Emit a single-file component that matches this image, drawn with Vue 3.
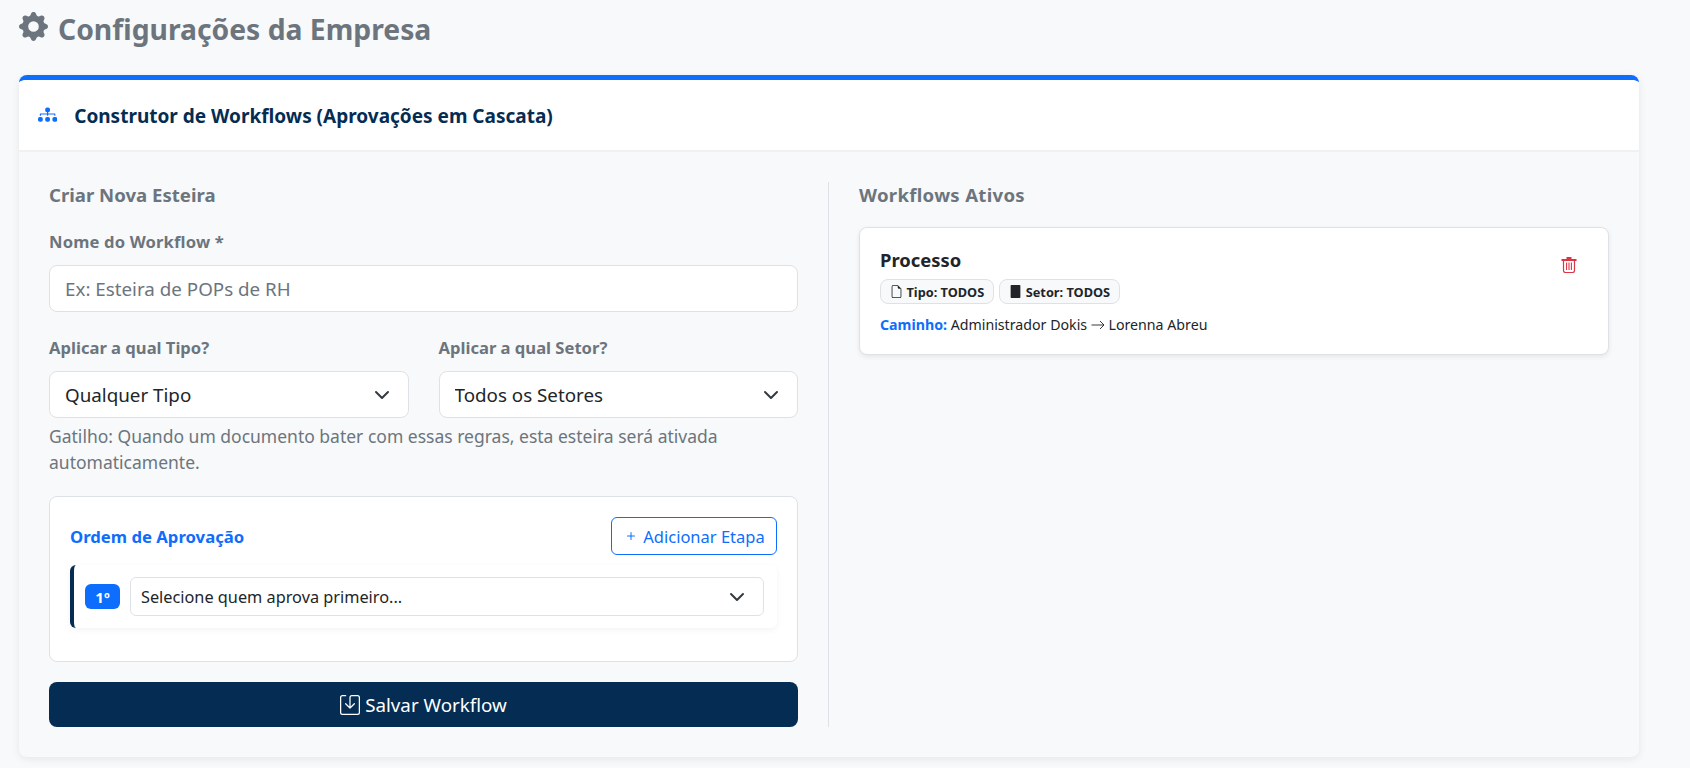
<script setup>
const steps = [{ n: '1º', label: 'Selecione quem aprova primeiro...' }]
</script>

<template>
  <div class="page">
    <h1 class="title">
      <svg class="gear" viewBox="0 0 16 16" fill="currentColor"><path d="M9.405 1.05c-.413-1.4-2.397-1.4-2.81 0l-.1.34a1.464 1.464 0 0 1-2.105.872l-.31-.17c-1.283-.698-2.686.705-1.987 1.987l.169.311c.446.82.023 1.841-.872 2.105l-.34.1c-1.4.413-1.4 2.397 0 2.81l.34.1a1.464 1.464 0 0 1 .872 2.105l-.17.31c-.698 1.283.705 2.686 1.987 1.987l.311-.169a1.464 1.464 0 0 1 2.105.872l.1.34c.413 1.4 2.397 1.4 2.81 0l.1-.34a1.464 1.464 0 0 1 2.105-.872l.31.17c1.283.698 2.686-.705 1.987-1.987l-.169-.311a1.464 1.464 0 0 1 .872-2.105l.34-.1c1.4-.413 1.4-2.397 0-2.81l-.34-.1a1.464 1.464 0 0 1-.872-2.105l.17-.31c.698-1.283-.705-2.686-1.987-1.987l-.311.169a1.464 1.464 0 0 1-2.105-.872zM8 10.93a2.929 2.929 0 1 1 0-5.86 2.929 2.929 0 0 1 0 5.858z"/></svg>
      Configurações da Empresa
    </h1>

    <section class="card">
      <header class="card-head">
        <svg class="diagram" viewBox="0 0 16 16" fill="currentColor"><path fill-rule="evenodd" d="M6 3.5A1.5 1.5 0 0 1 7.5 2h1A1.5 1.5 0 0 1 10 3.5v1A1.5 1.5 0 0 1 8.5 6v1H14a.5.5 0 0 1 .5.5v1a.5.5 0 0 1-1 0V8h-5v.5a.5.5 0 0 1-1 0V8h-5v.5a.5.5 0 0 1-1 0v-1A.5.5 0 0 1 2 7h5.5V6A1.5 1.5 0 0 1 6 4.5zm-6 8A1.5 1.5 0 0 1 1.5 10h1A1.5 1.5 0 0 1 4 11.5v1A1.5 1.5 0 0 1 2.5 14h-1A1.5 1.5 0 0 1 0 12.5zm6 0A1.5 1.5 0 0 1 7.5 10h1a1.5 1.5 0 0 1 1.5 1.5v1A1.5 1.5 0 0 1 8.5 14h-1A1.5 1.5 0 0 1 6 12.5zm6 0a1.5 1.5 0 0 1 1.5-1.5h1a1.5 1.5 0 0 1 1.5 1.5v1a1.5 1.5 0 0 1-1.5 1.5h-1a1.5 1.5 0 0 1-1.5-1.5z"/></svg>
        <h2>Construtor de Workflows (Aprovações em Cascata)</h2>
      </header>

      <div class="card-body">
        <div class="col-left">
          <h3 class="sec">Criar Nova Esteira</h3>
          <label class="lbl lbl-name">Nome do Workflow *</label>
          <input class="ctl" type="text" placeholder="Ex: Esteira de POPs de RH" />

          <div class="two">
            <div>
              <label class="lbl">Aplicar a qual Tipo?</label>
              <div class="sel">
                <select class="ctl"><option>Qualquer Tipo</option></select>
                <svg class="chev" viewBox="0 0 16 16"><path d="m2 5 6 6 6-6" fill="none" stroke="#343a40" stroke-linecap="round" stroke-linejoin="round" stroke-width="2"/></svg>
              </div>
            </div>
            <div>
              <label class="lbl">Aplicar a qual Setor?</label>
              <div class="sel">
                <select class="ctl"><option>Todos os Setores</option></select>
                <svg class="chev" viewBox="0 0 16 16"><path d="m2 5 6 6 6-6" fill="none" stroke="#343a40" stroke-linecap="round" stroke-linejoin="round" stroke-width="2"/></svg>
              </div>
            </div>
          </div>
          <p class="help">Gatilho: Quando um documento bater com essas regras, esta esteira será ativada automaticamente.</p>

          <div class="order">
            <div class="order-head">
              <h4>Ordem de Aprovação</h4>
              <button class="btn-add" type="button">
                <svg viewBox="0 0 16 16" fill="currentColor"><path d="M8 4a.5.5 0 0 1 .5.5v3h3a.5.5 0 0 1 0 1h-3v3a.5.5 0 0 1-1 0v-3h-3a.5.5 0 0 1 0-1h3v-3A.5.5 0 0 1 8 4"/></svg>
                Adicionar Etapa
              </button>
            </div>
            <div v-for="s in steps" :key="s.n" class="step">
              <span class="num">{{ s.n }}</span>
              <div class="sel sel-sm">
                <select class="ctl ctl-sm"><option>{{ s.label }}</option></select>
                <svg class="chev" viewBox="0 0 16 16"><path d="m2 5 6 6 6-6" fill="none" stroke="#343a40" stroke-linecap="round" stroke-linejoin="round" stroke-width="2"/></svg>
              </div>
            </div>
          </div>

          <button class="btn-save" type="button">
            <svg viewBox="0 0 16 16" fill="currentColor"><path d="M2 1a1 1 0 0 0-1 1v12a1 1 0 0 0 1 1h12a1 1 0 0 0 1-1V2a1 1 0 0 0-1-1H9.5a1 1 0 0 0-1 1v7.293l2.646-2.647a.5.5 0 0 1 .708.708l-3.5 3.5a.5.5 0 0 1-.708 0l-3.5-3.5a.5.5 0 1 1 .708-.708L7.5 9.293V2a2 2 0 0 1 2-2H14a2 2 0 0 1 2 2v12a2 2 0 0 1-2 2H2a2 2 0 0 1-2-2V2a2 2 0 0 1 2-2h2.5a.5.5 0 0 1 0 1z"/></svg>
            Salvar Workflow
          </button>
        </div>

        <div class="col-right">
          <h3 class="sec sec-wide">Workflows Ativos</h3>
          <article class="wf">
            <div class="wf-main">
              <h5>Processo</h5>
              <div class="tags">
                <span class="tag">
                  <svg viewBox="0 0 16 16" fill="currentColor"><path d="M14 4.5V14a2 2 0 0 1-2 2H4a2 2 0 0 1-2-2V2a2 2 0 0 1 2-2h5.5zm-3 0A1.5 1.5 0 0 1 9.5 3V1H4a1 1 0 0 0-1 1v12a1 1 0 0 0 1 1h8a1 1 0 0 0 1-1V4.5z"/></svg>
                  Tipo: TODOS
                </span>
                <span class="tag">
                  <svg viewBox="0 0 16 16" fill="currentColor"><path d="M3 0h10a1 1 0 0 1 1 1v14a1 1 0 0 1-1 1H3a1 1 0 0 1-1-1V1a1 1 0 0 1 1-1"/></svg>
                  Setor: TODOS
                </span>
              </div>
              <p class="path">
                <b>Caminho:</b> Administrador Dokis
                <svg class="arrow" viewBox="0 0 14 10"><path d="M.5 5h12.5M9 1l4 4-4 4" fill="none" stroke="currentColor" stroke-width=".9"/></svg>
                Lorenna Abreu
              </p>
            </div>
            <svg class="trash" viewBox="0 0 16 17">
              <path d="M.5 3h15v2H.5zM5.5 1h5v2h-5z" fill="currentColor"/>
              <path d="M2.5 5v9.5a2 2 0 0 0 2 2h7a2 2 0 0 0 2-2V5" fill="none" stroke="currentColor" stroke-width="1.2"/>
              <path d="M5.6 6.5v7.5M8 6.5v7.5M10.4 6.5v7.5" fill="none" stroke="currentColor" stroke-width="1.1"/>
            </svg>
          </article>
        </div>
      </div>
    </section>
  </div>
</template>

<style>
html, body { margin: 0; background: #f8f9fa; }
</style>

<style scoped>
* { box-sizing: border-box; }
.page {
  font-family: "Noto Sans", "Open Sans", sans-serif;
  color: #212529;
  padding: 0 51px 11px 19px;
  min-height: 768px;
  background: #f8f9fa;
}
.title {
  margin: 0;
  height: 75px;
  padding-top: 9px;
  display: flex;
  align-items: flex-start;
  gap: 10px;
  font-size: 28.3px;
  line-height: 40px;
  font-weight: 700;
  color: #6c757d;
}
.gear { width: 29px; height: 29px; margin-top: 3px; flex: none; }
.card {
  background: #f8f9fa;
  border-top: 5px solid #0d6efd;
  border-radius: 8px;
  box-shadow: 0 2px 8px rgba(0, 0, 0, .08);
  overflow: hidden;
  height: 682px;
}
.card-head {
  height: 72px;
  background: #fff;
  border-bottom: 2px solid #f0f1f3;
  display: flex;
  align-items: center;
  padding: 0 19px;
  gap: 17px;
}
.diagram { width: 19.2px; height: 19.2px; color: #0d6efd; flex: none; }
.card-head h2 { margin: 0; padding-top: 2px; font-size: 19px; font-weight: 700; color: #052c52; }
.card-body {
  padding: 30px;
  display: grid;
  grid-template-columns: 780px 780px;
}
.col-left { padding-right: 30px; border-right: 1px solid #dee2e6; display: flex; flex-direction: column; }
.col-right { padding-left: 30px; }
.sec { margin: 0; font-size: 18.6px; line-height: 26px; font-weight: 700; color: #6c757d; }
.sec-wide { letter-spacing: .3px; }
.lbl { display: block; font-size: 16.6px; line-height: 24px; font-weight: 700; color: #6c757d; }
.col-left > .lbl { margin-top: 22px; margin-bottom: 11px; }
.lbl-name { letter-spacing: .15px; }
.ctl {
  display: block;
  width: 100%;
  height: 47px;
  padding: 0 15px;
  font: inherit;
  font-size: 18.8px;
  color: #212529;
  background: #fff;
  border: 1px solid #dee2e6;
  border-radius: 8px;
  outline: none;
  appearance: none;
}
.ctl::placeholder { color: #6c757d; opacity: 1; }
.two { display: grid; grid-template-columns: 1fr 1fr; gap: 30px; margin-top: 24px; }
.two .lbl { margin-bottom: 11px; }
.sel { position: relative; }
.chev { position: absolute; right: 19px; top: 50%; margin-top: -8px; width: 16px; height: 16px; pointer-events: none; }
.help { margin: 5px 0 0; font-size: 17.5px; line-height: 26px; color: #6c757d; }
.order {
  margin-top: 21px;
  height: 166px;
  background: #fff;
  border: 1px solid #dee2e6;
  border-radius: 8px;
  padding: 20px;
}
.order-head { display: flex; align-items: center; justify-content: space-between; height: 38px; margin-bottom: 10px; }
.order-head h4 { margin: 0; font-size: 16.7px; font-weight: 700; color: #0d6efd; }
.btn-add {
  height: 38px;
  width: 166px;
  display: flex;
  align-items: center;
  justify-content: center;
  gap: 4px;
  font: inherit;
  font-size: 16.5px;
  color: #0d6efd;
  background: #fff;
  border: 1px solid #0d6efd;
  border-radius: 6px;
}
.btn-add svg { width: 16px; height: 16px; }
.step {
  height: 63px;
  display: flex;
  align-items: center;
  gap: 10px;
  background: #fff;
  border-left: 4px solid #052c52;
  border-radius: 6px;
  box-shadow: 0 2px 6px rgba(0, 0, 0, .05);
  padding: 0 13px 0 11px;
}
.num {
  width: 35px;
  height: 25px;
  display: flex;
  align-items: center;
  justify-content: center;
  background: #0d6efd;
  color: #fff;
  font-size: 15px;
  font-weight: 700;
  border-radius: 6px;
  flex: none;
}
.sel-sm { flex: 1; }
.ctl-sm { height: 39px; font-size: 16.3px; padding: 0 10px; border-radius: 6px; }
.btn-save {
  margin-top: 20px;
  height: 45px;
  display: flex;
  align-items: center;
  justify-content: center;
  gap: 5px;
  font: inherit;
  font-size: 18.8px;
  color: #fff;
  background: #052c52;
  border: 0;
  border-radius: 8px;
}
.btn-save svg { width: 20px; height: 20px; }
.wf {
  margin-top: 19px;
  height: 128px;
  background: #fff;
  border: 1px solid #dee2e6;
  border-radius: 8px;
  box-shadow: 0 2px 5px rgba(0, 0, 0, .08);
  padding: 20px;
  display: flex;
  justify-content: space-between;
}
.wf h5 { margin: 0; font-size: 18.4px; line-height: 24px; font-weight: 700; color: #212529; }
.tags { display: flex; gap: 5px; margin-top: 7px; }
.tag {
  height: 25px;
  display: inline-flex;
  align-items: center;
  gap: 3.5px;
  padding: 0 9px;
  font-size: 12.75px;
  font-weight: 700;
  background: #f8f9fa;
  border: 1px solid #dee2e6;
  border-radius: 8px;
}
.tag svg { width: 13px; height: 13px; }
.path { margin: 11px 0 0; font-size: 14.2px; line-height: 20px; }
.path b { color: #0d6efd; font-weight: 700; }
.arrow { width: 14px; height: 10px; }
.trash { width: 16px; height: 17px; color: #dc3545; margin: 8px 11px 0 0; flex: none; }
</style>
